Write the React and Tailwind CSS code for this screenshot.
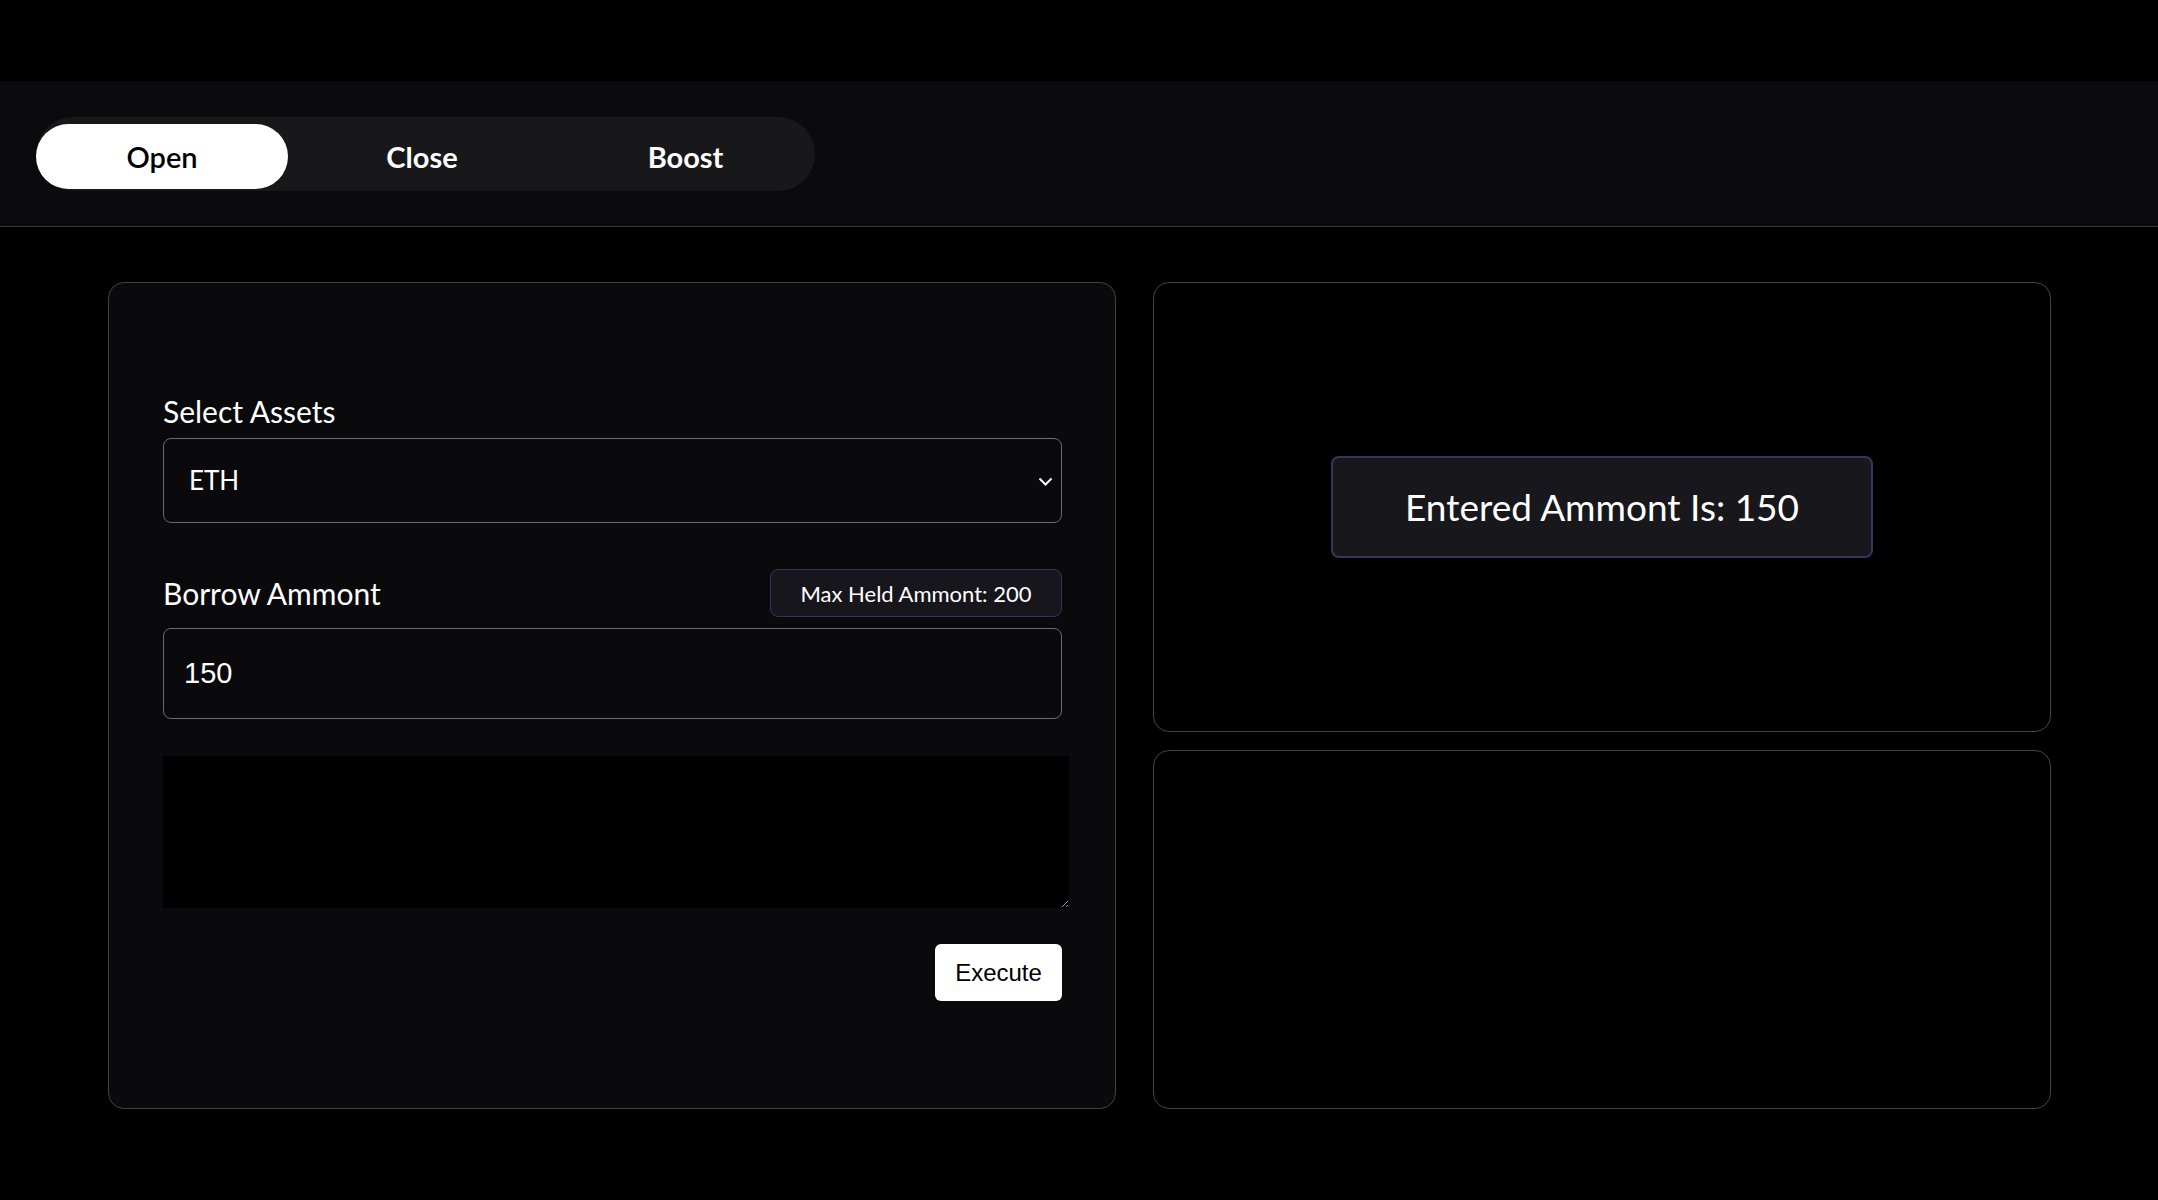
import React, { useState } from 'react';

const tabs = [
  { name: 'Open', width: 'w-[252px]' },
  { name: 'Close', width: 'w-[268px]' },
  { name: 'Boost', width: 'w-[259px]' },
];

const App = () => {
  const [active, setActive] = useState('Open');
  const [asset, setAsset] = useState('ETH');
  const [amount, setAmount] = useState('150');

  return (
    <div className="min-h-screen bg-black text-white font-['Lato',sans-serif]">
      <div className="h-[81px]" />

      {/* Tab header */}
      <div className="h-[146px] bg-[#0b0b0d] border-b border-[#3a3a3a] pl-[36px] pt-[36px]">
        <div className="flex h-[74px] w-[779px] rounded-full bg-[#18181b]">
          {tabs.map((tab) => (
            <button
              key={tab.name}
              onClick={() => setActive(tab.name)}
              className={`${tab.width} mt-[7px] h-[65px] rounded-full text-[29px] leading-none ${
                active === tab.name ? 'bg-white text-black font-semibold' : 'text-white font-bold'
              }`}
            >
              {tab.name}
            </button>
          ))}
        </div>
      </div>

      <div className="flex gap-[37px] pl-[108px] pt-[55px]">
        {/* Form card */}
        <div className="w-[1008px] h-[827px] rounded-2xl border border-[#444] bg-[#0a0a0c] pl-[54px] pt-[110px]">
          <label className="block text-[30px] leading-[1.2]">Select Assets</label>
          <div className="relative mt-[9px] w-[899px]">
            <select
              value={asset}
              onChange={(e) => setAsset(e.target.value)}
              className="appearance-none w-full h-[85px] rounded-lg border border-[#6b6b6b] bg-[#0a0a0c] pl-[25px] text-[26px] text-white outline-none font-['Lato',sans-serif]"
            >
              <option>ETH</option>
              <option>BTC</option>
              <option>USDC</option>
            </select>
            <svg
              className="absolute right-[9px] top-[39px] pointer-events-none"
              width="15"
              height="9"
              viewBox="0 0 15 9"
              fill="none"
            >
              <path d="M1.5 1.5l6 6 6-6" stroke="white" strokeWidth="2" />
            </svg>
          </div>

          <div className="mt-[46px] flex h-[48px] w-[899px] items-center justify-between">
            <label className="text-[30px] leading-[1.2]">Borrow Ammont</label>
            <div className="flex h-[48px] w-[292px] items-center justify-center rounded-lg border border-[#37315c] bg-[#17161c] text-[22px]">
              Max Held Ammont: 200
            </div>
          </div>

          <input
            type="text"
            value={amount}
            onChange={(e) => setAmount(e.target.value)}
            className="mt-[11px] block w-[899px] h-[91px] rounded-lg border border-[#6b6b6b] bg-[#0a0a0c] pl-[20px] text-[29px] text-white outline-none font-['Liberation_Sans',Arial,sans-serif]"
          />

          <textarea className="mt-[37px] block w-[906px] h-[152px] bg-black text-white outline-none" />

          <div className="mt-[36px] flex w-[899px] justify-end">
            <button className="h-[57px] w-[127px] rounded-md bg-white text-[24px] text-black font-['Liberation_Sans',Arial,sans-serif]">
              Execute
            </button>
          </div>
        </div>

        {/* Summary column */}
        <div className="flex w-[898px] flex-col gap-[18px]">
          <div className="flex h-[450px] items-center justify-center rounded-2xl border border-[#444] bg-black">
            <div className="flex h-[102px] w-[542px] items-center justify-center rounded-lg border-2 border-[#39335f] bg-[#18171c] text-[37px]">
              Entered Ammont Is: {amount}
            </div>
          </div>
          <div className="h-[359px] rounded-2xl border border-[#444] bg-black" />
        </div>
      </div>
    </div>
  );
};

export default App;
